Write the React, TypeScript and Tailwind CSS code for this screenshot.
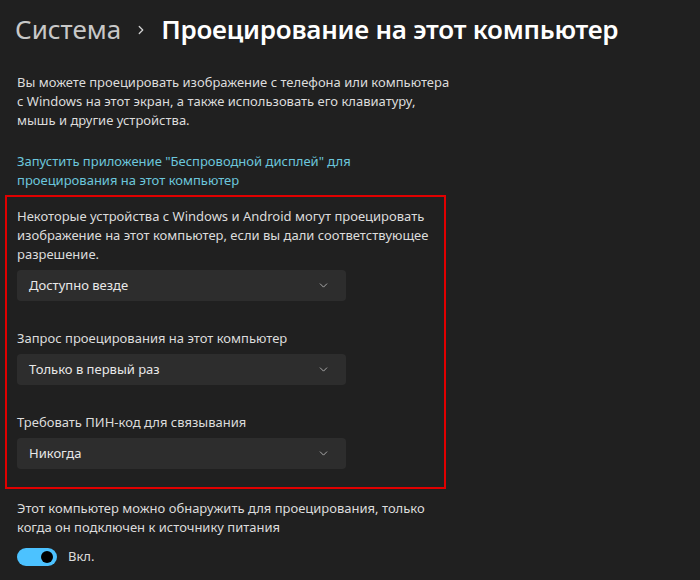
import { ChevronDown, ChevronRight } from "lucide-react";

const font = { fontFamily: '"Noto Sans", "Open Sans", sans-serif' };

function Select({ value }: { value: string }) {
  return (
    <div className="flex h-[31px] w-[329px] items-center justify-between rounded-[4px] bg-[#2d2d2d] pl-3 pr-4 text-[13px] text-[#e8e8e8]">
      <span>{value}</span>
      <ChevronDown size={13} strokeWidth={1.6} className="text-[#bcbcbc]" />
    </div>
  );
}

export default function App() {
  return (
    <div
      className="h-[580px] w-[700px] overflow-hidden whitespace-nowrap bg-[#202020] text-[#dcdcdc]"
      style={font}
    >
      <div className="flex items-center pl-[15px] pt-[10px] leading-[38px]">
        <span className="text-[26px] text-[#c8c8c8]">Система</span>
        <ChevronRight size={14} strokeWidth={2.2} className="ml-[13px] mr-[13px] mt-[2px] text-[#d0d0d0]" />
        <span className="text-[26px] font-semibold tracking-[-0.25px] text-white">
          Проецирование на этот компьютер
        </span>
      </div>

      <div className="pl-[17px] pt-[25px] text-[13px] leading-[19px]">
        <p>
          Вы можете проецировать изображение с телефона или компьютера
          <br />с Windows на этот экран, а также использовать его клавиатуру,
          <br />мышь и другие устройства.
        </p>
        <p className="mt-[22px] text-[#6cc6dc]">
          Запустить приложение "Беспроводной дисплей" для
          <br />
          проецирования на этот компьютер
        </p>
      </div>

      <div className="ml-[5px] mt-[5px] w-[441px] border-2 border-[#e00000] pb-[18px] pl-[10px] pt-[10px] text-[13px] leading-[19px]">
        <p>
          Некоторые устройства с Windows и Android могут проецировать
          <br />
          изображение на этот компьютер, если вы дали соответствующее
          <br />
          разрешение.
        </p>
        <div className="mt-[6px]">
          <Select value="Доступно везде" />
        </div>
        <p className="mt-[28px]">Запрос проецирования на этот компьютер</p>
        <div className="mt-[6px]">
          <Select value="Только в первый раз" />
        </div>
        <p className="mt-[28px]">Требовать ПИН-код для связывания</p>
        <div className="mt-[6px]">
          <Select value="Никогда" />
        </div>
      </div>

      <div className="pl-[17px] pt-[10px] text-[13px] leading-[19px]">
        <p>
          Этот компьютер можно обнаружить для проецирования, только
          <br />
          когда он подключен к источнику питания
        </p>
        <div className="mt-[10px] flex items-center gap-[11px]">
          <div className="flex h-[18px] w-[40px] items-center justify-end rounded-full bg-[#4cc2ff] pr-[4px]">
            <div className="h-[12px] w-[12px] rounded-full bg-black" />
          </div>
          <span>Вкл.</span>
        </div>
      </div>
    </div>
  );
}
